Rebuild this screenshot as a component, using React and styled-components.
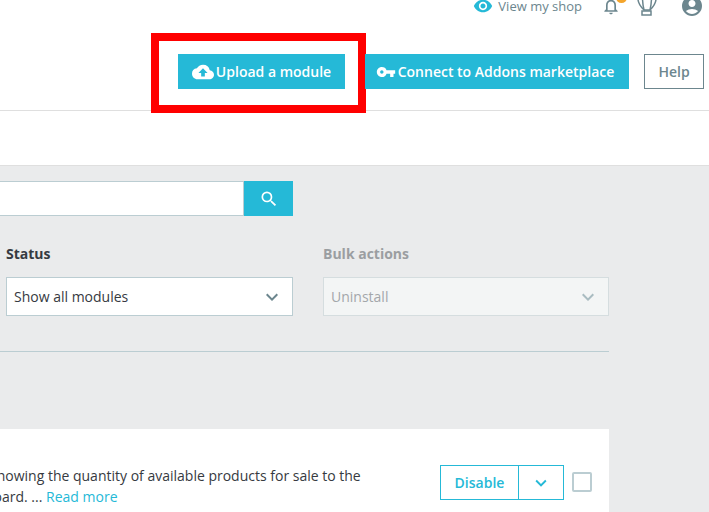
import React from 'react';
import styled, { createGlobalStyle } from 'styled-components';
import {
    MdCloudUpload,
    MdVpnKey,
    MdSearch,
    MdExpandMore,
    MdVisibility,
    MdNotificationsNone,
    MdAccountCircle,
} from 'react-icons/md';

const GlobalStyle = createGlobalStyle`
    html, body {
        margin: 0;
        padding: 0;
        height: 100%;
        overflow: hidden;
        background: #eaebec;
        font-family: "Open Sans", "Liberation Sans", sans-serif;
    }
`;

const Page = styled.div`
    width: 709px;
    height: 512px;
    overflow: hidden;
    display: flex;
    flex-direction: column;
`;

const Header = styled.header`
    height: 110px;
    background: #fff;
    border-bottom: 1px solid #dfdfdf;
    display: flex;
    flex-direction: column;
    flex-shrink: 0;
`;

const TopBar = styled.div`
    height: 60px;
    margin-top: -6px;
    padding-right: 5px;
    display: flex;
    justify-content: flex-end;
    align-items: flex-start;
`;

const ShopLink = styled.a`
    display: flex;
    align-items: center;
    gap: 5px;
    height: 24px;
    font-size: 13px;
    color: #6c868e;
    margin-right: 19px;
    svg { color: #25b9d7; }
`;

const TopIcon = styled.span`
    position: relative;
    display: flex;
    width: ${(p) => p.$w}px;
    margin-right: ${(p) => p.$gap}px;
    height: 24px;
    align-items: center;
    justify-content: center;
    color: #6c868e;
`;

const Badge = styled.span`
    position: absolute;
    top: -2px;
    right: -6px;
    width: 11px;
    height: 11px;
    border-radius: 50%;
    background: #f4a52c;
`;

const Actions = styled.div`
    display: flex;
    justify-content: flex-end;
    padding-right: 5px;
`;

const Button = styled.button`
    position: relative;
    box-sizing: border-box;
    height: 35px;
    width: ${(p) => p.$w}px;
    margin-right: ${(p) => p.$gap || 0}px;
    padding: 0 ${(p) => p.$pad || 0}px 0 0;
    border: none;
    background: #25b9d7;
    color: #fff;
    font: 600 14px "Open Sans", sans-serif;
    display: flex;
    align-items: center;
    justify-content: center;
    gap: 2px;
`;

const HelpButton = styled.button`
    width: 60px;
    height: 35px;
    padding: 0;
    background: #fff;
    border: 1px solid #6c868e;
    color: #6c868e;
    font: 600 14px "Open Sans", sans-serif;
`;

const Highlight = styled.span`
    position: absolute;
    left: -27px;
    top: -21px;
    width: 215px;
    height: 80px;
    box-sizing: border-box;
    border: 8px solid #ff0000;
    pointer-events: none;
`;

const Tabs = styled.div`
    height: 54px;
    background: #fff;
    border-bottom: 1px solid #dfdfdf;
    flex-shrink: 0;
`;

const Content = styled.main`
    width: 609px;
    display: flex;
    flex-direction: column;
    padding-top: 15px;
`;

const SearchRow = styled.div`
    display: flex;
    width: 293px;
    height: 35px;
`;

const SearchInput = styled.div`
    flex: 1;
    background: #fff;
    border: 1px solid #bbcdd2;
    border-left: none;
`;

const SearchButton = styled.button`
    width: 49px;
    padding: 0;
    border: none;
    background: #25b9d7;
    color: #fff;
    display: flex;
    align-items: center;
    justify-content: center;
`;

const Filters = styled.div`
    display: flex;
    gap: 30px;
    margin-top: 28px;
    margin-left: 6px;
`;

const Filter = styled.div`
    width: ${(p) => p.$w}px;
`;

const FilterLabel = styled.label`
    display: block;
    height: 20px;
    line-height: 20px;
    margin-bottom: 13px;
    font-size: 14px;
    font-weight: 700;
    color: ${(p) => (p.$disabled ? '#9b9ea1' : '#363a41')};
`;

const Select = styled.div`
    box-sizing: border-box;
    height: 39px;
    padding: 0 8px 0 7px;
    display: flex;
    align-items: center;
    justify-content: space-between;
    font-size: 14px;
    color: ${(p) => (p.$disabled ? '#a3a7aa' : '#363a41')};
    background: ${(p) => (p.$disabled ? '#f3f5f5' : '#fff')};
    border: 1px solid ${(p) => (p.$disabled ? '#d5dddf' : '#bbcdd2')};
    svg { color: ${(p) => (p.$disabled ? '#a9bcc1' : '#6c868e')}; }
`;

const Divider = styled.hr`
    margin: 35px 0 0;
    border: none;
    border-top: 1px solid #bbcdd2;
`;

const Card = styled.section`
    margin-top: 77px;
    height: 83px;
    background: #fff;
    display: flex;
    justify-content: space-between;
    padding: 36px 17px 0 0;
    box-sizing: border-box;
    overflow: hidden;
`;

const Description = styled.div`
    font-size: 14px;
    line-height: 21px;
    color: #363a41;
    white-space: nowrap;
`;

const DescLine = styled.div`
    margin-left: ${(p) => p.$shift}px;
`;

const ReadMore = styled.a`
    color: #25b9d7;
`;

const RowActions = styled.div`
    display: flex;
    align-items: flex-start;
    gap: 8px;
`;

const SplitButton = styled.div`
    display: flex;
    box-sizing: border-box;
    height: 35px;
    width: 124px;
    border: 1px solid #25b9d7;
    color: #25b9d7;
`;

const DisableLabel = styled.span`
    width: 77px;
    border-right: 1px solid #25b9d7;
    display: flex;
    align-items: center;
    justify-content: center;
    font-size: 14px;
    font-weight: 600;
`;

const Caret = styled.span`
    flex: 1;
    display: flex;
    align-items: center;
    justify-content: center;
`;

const Checkbox = styled.span`
    box-sizing: border-box;
    display: block;
    width: 20px;
    height: 20px;
    margin-top: 7px;
    border: 2px solid #bbcdd2;
    border-radius: 2px;
`;

const App = () => {
    return (
        <Page>
            <GlobalStyle />
            <Header>
                <TopBar>
                    <ShopLink>
                        <MdVisibility size={20} />
                        View my shop
                    </ShopLink>
                    <TopIcon $w={20} $gap={16}>
                        <MdNotificationsNone size={22} />
                        <Badge />
                    </TopIcon>
                    <TopIcon $w={20} $gap={23}>
                        <svg width="20" height="24" viewBox="0 0 20 24" fill="none" stroke="currentColor" strokeWidth="1.5">
                            <path d="M7 16C3 12 1 9 1 5a9 9 0 0 1 18 0c0 4-2 7-6 11z" />
                            <path d="M7 16C6 12 5.500 8 5.500 3M13 16c1-4 1.500-8 1.500-13" />
                            <rect x="5" y="17" width="9" height="4" />
                        </svg>
                    </TopIcon>
                    <TopIcon $w={24} $gap={0}>
                        <MdAccountCircle size={24} />
                    </TopIcon>
                </TopBar>
                <Actions>
                    <Button $w={167} $gap={20}>
                        <MdCloudUpload size={22} />
                        Upload a module
                        <Highlight />
                    </Button>
                    <Button $w={264} $gap={15} $pad={4}>
                        <MdVpnKey size={20} />
                        Connect to Addons marketplace
                    </Button>
                    <HelpButton>Help</HelpButton>
                </Actions>
            </Header>
            <Tabs />
            <Content>
                <SearchRow>
                    <SearchInput />
                    <SearchButton>
                        <MdSearch size={20} />
                    </SearchButton>
                </SearchRow>
                <Filters>
                    <Filter $w={287}>
                        <FilterLabel>Status</FilterLabel>
                        <Select>
                            Show all modules
                            <MdExpandMore size={24} />
                        </Select>
                    </Filter>
                    <Filter $w={286}>
                        <FilterLabel $disabled>Bulk actions</FilterLabel>
                        <Select $disabled>
                            Uninstall
                            <MdExpandMore size={24} />
                        </Select>
                    </Filter>
                </Filters>
                <Divider />
                <Card>
                    <Description>
                        <DescLine $shift={-10}>showing the quantity of available products for sale to the</DescLine>
                        <DescLine $shift={-15}>
                            board. ... <ReadMore>Read more</ReadMore>
                        </DescLine>
                    </Description>
                    <RowActions>
                        <SplitButton>
                            <DisableLabel>Disable</DisableLabel>
                            <Caret>
                                <MdExpandMore size={22} />
                            </Caret>
                        </SplitButton>
                        <Checkbox />
                    </RowActions>
                </Card>
            </Content>
        </Page>
    );
};

export default App;
